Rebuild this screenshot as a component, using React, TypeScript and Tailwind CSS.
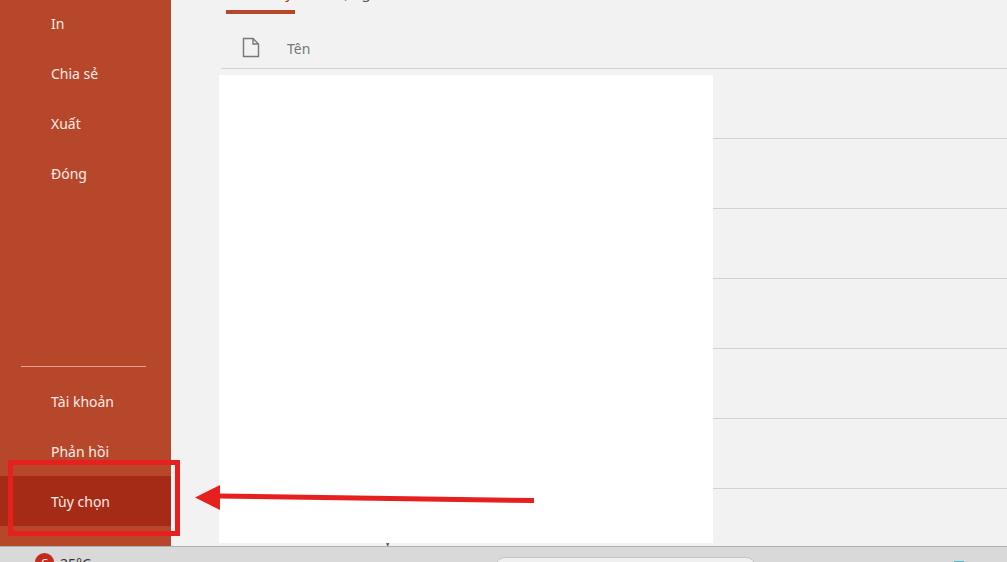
const topItems = ['In', 'Chia sẻ', 'Xuất', 'Đóng'];
const bottomItems = ['Tài khoản', 'Phản hồi', 'Tùy chọn'];

function MenuItem({ label }: { label: string }) {
  const active = label === 'Tùy chọn';
  return (
    <div className={`h-[50px] flex items-center pl-[51px] text-[14px] text-[#f7ece9] ${active ? 'bg-[#a62b17]' : ''}`}>
      {label}
    </div>
  );
}

function FileIcon() {
  return (
    <svg width="18" height="21" viewBox="0 0 18 21" fill="none" stroke="#777777" strokeWidth="1.4">
      <path d="M1.5 1.5H11L16.5 7V19.5H1.5Z" />
      <path d="M11 1.5V7H16.5" />
    </svg>
  );
}

export default function App() {
  return (
    <div
      className="relative w-[1007px] h-[562px] overflow-hidden flex flex-col bg-[#f2f2f2]"
      style={{ fontFamily: '"Noto Sans", "Open Sans", sans-serif' }}
    >
      <div className="flex flex-1 min-h-0">
        {/* Sidebar */}
        <aside className="w-[171px] shrink-0 bg-[#b7472a] flex flex-col justify-between pb-[20px]">
          <div className="-mt-[2px]">
            {topItems.map((item) => (
              <MenuItem key={item} label={item} />
            ))}
          </div>
          <div>
            <div className="ml-[21px] w-[125px] h-px bg-[#e9a091] mb-[9px]" />
            {bottomItems.map((item) => (
              <MenuItem key={item} label={item} />
            ))}
          </div>
        </aside>

        {/* File list */}
        <main className="flex-1 min-w-0 pl-[50px]">
          <div className="h-[14px] flex items-end pl-[5px] text-[15px] text-[#555555]">
            <div className="w-[69px] h-[34px] shrink-0 border-b-4 border-[#b7472a] pt-[2px] pl-[9px] whitespace-nowrap leading-[20px] text-[#a8381f]">
              Gần đây
            </div>
            <div className="h-[34px] pt-[2px] pl-[25px] whitespace-nowrap leading-[20px]">Được ghim</div>
          </div>
          <div className="h-[55px] flex items-center border-b border-[#d2d2d2] text-[14px] text-[#777777]">
            <div className="ml-[21px] w-[45px] pt-[12px]">
              <FileIcon />
            </div>
            <span className="pt-[14px]">Tên</span>
          </div>
          {[0, 1, 2, 3, 4, 5].map((row) => (
            <div key={row} className="h-[70px] border-b border-[#d2d2d2]" />
          ))}
          <div className="h-[57px] flex pl-[163px] pt-[41px] text-[14px] text-[#555555] leading-[20px]">
            <span>ý</span>
            <span className="ml-[76px] mt-[2px]">_</span>
          </div>
        </main>
      </div>

      {/* Taskbar */}
      <footer className="h-[16px] shrink-0 border-t border-[#b0b0b0] bg-[#d9d9d9] flex items-start overflow-hidden pl-[35px]">
        <div className="mt-[6px] w-[19px] h-[19px] shrink-0 rounded-full bg-[#c42b1c] flex items-center justify-center text-[11px] leading-none text-white">
          C
        </div>
        <span className="ml-[6px] mt-[9px] w-[36px] text-[14px] leading-[16px] text-[#333333]">25°C</span>
        <div className="ml-[399px] mt-[10px] w-[261px] h-[20px] shrink-0 rounded-t-[10px] border border-[#c4c4c4] bg-[#f0f0f0]" />
        <div className="ml-[198px] mt-[14px] w-[10px] h-[2px] shrink-0 bg-[#4fb6c9]" />
      </footer>

      {/* White block pasted over the list */}
      <div className="absolute left-[219px] top-[75px] w-[494px] h-[468px] bg-white" />

      {/* Red annotation box */}
      <div className="absolute left-[8px] top-[460px] w-[172px] h-[76px] border-[5px] border-[#e5201f]" />

      {/* Red annotation arrow */}
      <svg className="absolute left-[190px] top-[480px]" width="350" height="35" viewBox="0 0 350 35">
        <path d="M344 20.5L28 16" stroke="#e5201f" strokeWidth="5" fill="none" />
        <path d="M5 17.5L30 5V30Z" fill="#e5201f" />
      </svg>
    </div>
  );
}
